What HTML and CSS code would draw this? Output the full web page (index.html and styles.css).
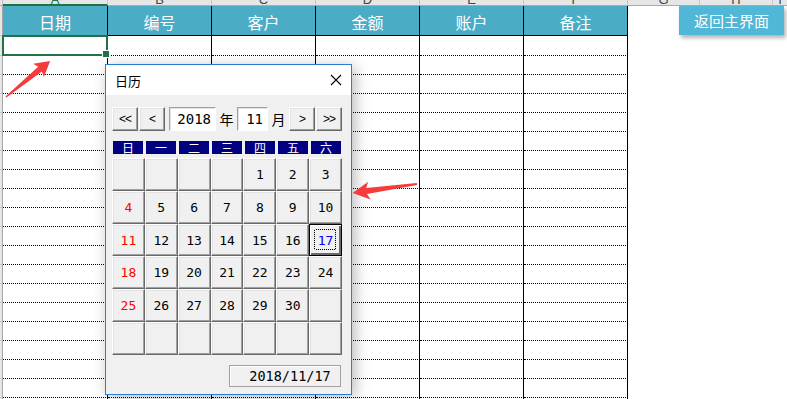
FILE: index.html
```html
<!DOCTYPE html>
<html lang="zh-CN">
<head>
    <meta charset="UTF-8">
    <meta name="viewport" content="width=device-width, initial-scale=1.0">
    <title>日历选择</title>
    <link rel="stylesheet" href="styles.css">
</head>
<body>
<div class="page">
    <div class="colbar">
        <div class="corner"></div>
        <div class="colhead col-a active">A</div>
        <div class="colhead">B</div>
        <div class="colhead">C</div>
        <div class="colhead">D</div>
        <div class="colhead">E</div>
        <div class="colhead">F</div>
        <div class="colhead col-g">G</div>
        <div class="colhead col-h">H</div>
        <div class="colhead col-rest">I</div>
    </div>

    <table class="sheet">
        <tr>
            <th class="gutter"></th>
            <th class="col-a">日期</th>
            <th>编号</th>
            <th>客户</th>
            <th>金额</th>
            <th>账户</th>
            <th>备注</th>
        </tr>
        <tr class="first"><td class="gutter"></td><td class="selected"></td><td></td><td></td><td></td><td></td><td></td></tr>
        <tr><td class="gutter"></td><td></td><td></td><td></td><td></td><td></td><td></td></tr>
        <tr><td class="gutter"></td><td></td><td></td><td></td><td></td><td></td><td></td></tr>
        <tr><td class="gutter"></td><td></td><td></td><td></td><td></td><td></td><td></td></tr>
        <tr><td class="gutter"></td><td></td><td></td><td></td><td></td><td></td><td></td></tr>
        <tr><td class="gutter"></td><td></td><td></td><td></td><td></td><td></td><td></td></tr>
        <tr><td class="gutter"></td><td></td><td></td><td></td><td></td><td></td><td></td></tr>
        <tr><td class="gutter"></td><td></td><td></td><td></td><td></td><td></td><td></td></tr>
        <tr><td class="gutter"></td><td></td><td></td><td></td><td></td><td></td><td></td></tr>
        <tr><td class="gutter"></td><td></td><td></td><td></td><td></td><td></td><td></td></tr>
        <tr><td class="gutter"></td><td></td><td></td><td></td><td></td><td></td><td></td></tr>
        <tr><td class="gutter"></td><td></td><td></td><td></td><td></td><td></td><td></td></tr>
        <tr><td class="gutter"></td><td></td><td></td><td></td><td></td><td></td><td></td></tr>
        <tr><td class="gutter"></td><td></td><td></td><td></td><td></td><td></td><td></td></tr>
        <tr><td class="gutter"></td><td></td><td></td><td></td><td></td><td></td><td></td></tr>
        <tr><td class="gutter"></td><td></td><td></td><td></td><td></td><td></td><td></td></tr>
        <tr><td class="gutter"></td><td></td><td></td><td></td><td></td><td></td><td></td></tr>
        <tr><td class="gutter"></td><td></td><td></td><td></td><td></td><td></td><td></td></tr>
        <tr><td class="gutter"></td><td></td><td></td><td></td><td></td><td></td><td></td></tr>
        <tr><td class="gutter"></td><td></td><td></td><td></td><td></td><td></td><td></td></tr>
    </table>

    <button type="button" class="back-btn">返回主界面</button>

    <div class="calendar">
        <div class="cal-title">
            <span>日历</span>
            <svg class="close" width="12" height="12" viewBox="0 0 12 12">
                <path d="M1 1 L11 11 M11 1 L1 11" stroke="#000" stroke-width="1.1" fill="none"/>
            </svg>
        </div>
        <div class="cal-body">
            <div class="cal-nav">
                <button type="button" class="nav-btn">&lt;&lt;</button>
                <button type="button" class="nav-btn gap-1">&lt;</button>
                <div class="field year">2018</div>
                <span class="unit">年</span>
                <div class="field month">11</div>
                <span class="unit">月</span>
                <button type="button" class="nav-btn">&gt;</button>
                <button type="button" class="nav-btn gap-1">&gt;&gt;</button>
            </div>

            <div class="weekdays">
                <span>日</span><span>一</span><span>二</span><span>三</span><span>四</span><span>五</span><span>六</span>
            </div>

            <div class="days">
                <div class="day"></div><div class="day"></div><div class="day"></div><div class="day"></div>
                <div class="day">1</div><div class="day">2</div><div class="day">3</div>
                <div class="day sun">4</div><div class="day">5</div><div class="day">6</div><div class="day">7</div>
                <div class="day">8</div><div class="day">9</div><div class="day">10</div>
                <div class="day sun">11</div><div class="day">12</div><div class="day">13</div><div class="day">14</div>
                <div class="day">15</div><div class="day">16</div><div class="day today">17</div>
                <div class="day sun">18</div><div class="day">19</div><div class="day">20</div><div class="day">21</div>
                <div class="day">22</div><div class="day">23</div><div class="day">24</div>
                <div class="day sun">25</div><div class="day">26</div><div class="day">27</div><div class="day">28</div>
                <div class="day">29</div><div class="day">30</div><div class="day"></div>
                <div class="day"></div><div class="day"></div><div class="day"></div><div class="day"></div>
                <div class="day"></div><div class="day"></div><div class="day"></div>
            </div>

            <div class="picked">2018/11/17</div>
        </div>
    </div>

    <svg class="marks" width="787" height="399" viewBox="0 0 787 399">
        <!-- arrow drawn pointing right, then turned into place -->
        <g transform="translate(6 97) rotate(-39.3)">
            <polygon points="0,-0.8 44,-3 42,-8.5 57,0 42,8.5 44,3 0,0.8" fill="#f53b3b"/>
        </g>
        <g transform="translate(417 184) rotate(172.1)">
            <polygon points="0,-1 51,-3 48,-9 65,0 48,9 51,3 0,1" fill="#f53b3b"/>
        </g>
    </svg>
</div>
</body>
</html>
```

FILE: styles.css
```css
* {
    box-sizing: border-box;
}

body {
    margin: 0;
    background-color: #ffffff;
    font-family: "Noto Sans CJK SC", sans-serif;
}

.page {
    position: relative;
    width: 787px;
    height: 399px;
    overflow: hidden;
}

/* column letters strip, mostly scrolled off */
.colbar {
    display: flex;
    height: 6px;
    background-color: #e6e6e6;
}

.colbar .corner {
    width: 3px;
    border-right: 1px solid #bdbdbd;
    border-bottom: 1px solid #ababab;
}

.colhead {
    width: 104px;
    height: 6px;
    overflow: hidden;
    border-right: 1px solid #c6c6c6;
    border-bottom: 1px solid #ababab;
    text-align: center;
    font: 13px/0 "Liberation Sans", sans-serif;
    color: #444444;
}

.colhead.col-a {
    width: 105px;
}

.colhead.active {
    color: #217346;
    border-bottom: 2px solid #217346;
}

.colhead.col-g {
    width: 72px;
}

.colhead.col-h {
    width: 73px;
}

.colhead.col-rest {
    flex: 1;
    border-right: none;
}

/* sheet */
.sheet {
    border-collapse: separate;
    border-spacing: 0;
    table-layout: fixed;
    width: 628px;
}

.sheet th,
.sheet td {
    padding: 0;
    width: 104px;
    border-right: 1px solid #000000;
}

.sheet th {
    height: 30px;
    padding-top: 2px;
    background-color: #4bacc6;
    color: #ffffff;
    font-size: 16px;
    font-weight: normal;
    border-bottom: 1px solid #000000;
}

.sheet td {
    height: 19px;
    border-bottom: 1px dotted #000000;
}

.sheet tr.first td {
    height: 20px;
}

.sheet .col-a {
    width: 105px;
}

.sheet .gutter,
.sheet td.gutter {
    width: 3px;
    background-color: #e6e6e6;
    border-right: 1px solid #a6a6a6;
    border-bottom: 1px solid #c8c8c8;
}

.sheet th.gutter {
    border-bottom: 1px solid #c8c8c8;
}

.sheet td.selected {
    position: relative;
}

.sheet td.selected::before {
    content: "";
    position: absolute;
    top: -1px;
    left: -1px;
    right: -1px;
    bottom: -1px;
    border: 2px solid #217346;
}

.sheet td.selected::after {
    content: "";
    position: absolute;
    right: -3px;
    bottom: -3px;
    width: 6px;
    height: 6px;
    background-color: #217346;
    border: 1px solid #ffffff;
}

.back-btn {
    position: absolute;
    left: 679px;
    top: 6px;
    width: 105px;
    height: 29px;
    padding: 0;
    border: none;
    background-color: #50b7d6;
    color: #ffffff;
    font-family: "Noto Sans CJK SC", sans-serif;
    font-size: 15px;
    box-shadow: 2px 3px 4px rgba(0, 0, 0, 0.3);
}

/* calendar dialog */
.calendar {
    position: absolute;
    left: 105px;
    top: 64px;
    width: 247px;
    height: 331px;
    border: 1px solid #2a7fd4;
    background-color: #f0f0f0;
    box-shadow: 3px 3px 14px rgba(0, 0, 0, 0.28);
}

.cal-title {
    display: flex;
    align-items: center;
    justify-content: space-between;
    height: 30px;
    padding: 0 9px 0 9px;
    background-color: #ffffff;
    font-size: 13px;
    color: #000000;
}

.cal-body {
    padding: 12px 0 0 6px;
}

.cal-nav {
    display: flex;
    height: 24px;
}

.nav-btn {
    width: 26px;
    height: 24px;
    padding: 0;
    background-color: #f0f0f0;
    border: 1px solid;
    border-color: #ffffff #696969 #696969 #ffffff;
    box-shadow: inset -1px -1px #a0a0a0, inset 1px 1px #e3e3e3;
    font: 12px "Liberation Sans", sans-serif;
    letter-spacing: -1px;
    color: #000000;
}

.nav-btn.gap-1 {
    margin-left: 1px;
}

.field {
    height: 24px;
    padding-right: 4px;
    background-color: #ffffff;
    border: 1px solid;
    border-color: #a0a0a0 #ffffff #ffffff #a0a0a0;
    box-shadow: inset 1px 1px #e3e3e3;
    text-align: right;
    font: 14px/22px "DejaVu Sans Mono", monospace;
}

.field.year {
    width: 47px;
    margin-left: 4px;
}

.field.month {
    width: 31px;
}

.unit {
    width: 21px;
    text-align: center;
    font-size: 14px;
    line-height: 24px;
}

.weekdays {
    display: grid;
    grid-template-columns: repeat(7, 33px);
    margin-top: 10px;
    height: 13px;
}

.weekdays span {
    margin: 0 2px 0 1px;
    background-color: #000080;
    color: #ffffff;
    font-size: 12px;
    line-height: 13px;
    text-align: center;
}

.days {
    display: grid;
    grid-template-columns: repeat(7, 1fr);
    grid-template-rows: repeat(6, 1fr);
    width: 230px;
    height: 197px;
    margin-top: 4px;
}

.day {
    display: flex;
    align-items: center;
    justify-content: center;
    background-color: #f0f0f0;
    border: 1px solid;
    border-color: #ffffff #696969 #696969 #ffffff;
    box-shadow: inset -1px -1px #a0a0a0, inset 1px 1px #e3e3e3;
    font: 13px "DejaVu Sans Mono", monospace;
    color: #000000;
}

.day.sun {
    color: #ff0000;
}

.day.today {
    position: relative;
    color: #0000ff;
    border: 1px solid #000000;
    box-shadow: inset 1px 1px #ffffff, inset -2px -2px #696969;
}

.day.today::before,
.day.today::after {
    content: "";
    position: absolute;
    top: 4px;
    left: 4px;
    right: 5px;
    bottom: 5px;
}

.day.today::before {
    border: 1px solid #000000;
}

.day.today::after {
    border: 1px dotted #ffff00;
}

.picked {
    width: 112px;
    height: 22px;
    margin: 10px 0 0 117px;
    padding-left: 10px;
    border: 1px solid #a0a0a0;
    box-shadow: inset 1px 1px #ffffff;
    text-align: center;
    font: 13.5px/20px "DejaVu Sans Mono", monospace;
}

.marks {
    position: absolute;
    top: 0;
    left: 0;
    pointer-events: none;
}
```
